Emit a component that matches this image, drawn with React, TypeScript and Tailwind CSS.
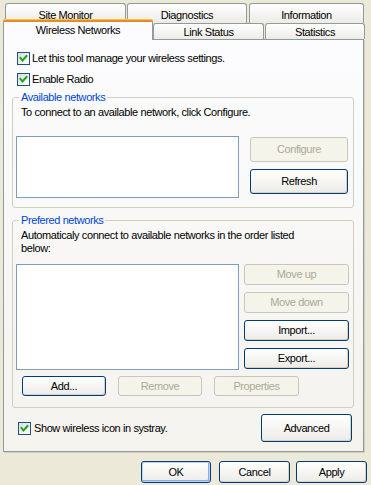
import React from "react";

function Check({ checked = true }: { checked?: boolean }) {
  return (
    <span className="flex h-[13px] w-[13px] shrink-0 items-center justify-center border border-[#1C5180] bg-linear-to-br from-[#DCDCD7] to-white">
      {checked && (
        <svg width="11" height="11" viewBox="0 0 11 11">
          <path d="M2.5 5 L4.5 7.5 L8.5 3" fill="none" stroke="#21A121" strokeWidth="2" strokeLinecap="square" />
        </svg>
      )}
    </span>
  );
}

function XpButton({
  label,
  className = "",
  disabled = false,
  isDefault = false,
}: {
  label: string;
  className?: string;
  disabled?: boolean;
  isDefault?: boolean;
}) {
  const look = disabled
    ? "border-[#C9C7BA] bg-[#F5F4EA] text-[#ACA899]"
    : isDefault
    ? "border-[#003C74] bg-linear-to-b from-white to-[#ECEBE6] text-black shadow-[inset_0_0_0_1px_#BCD4F6,inset_-1px_-1px_0_1px_#89ADE4]"
    : "border-[#003C74] bg-linear-to-b from-white to-[#ECEBE6] text-black shadow-[inset_-1px_-1px_0_#D6D0C5]";
  return (
    <div className={`flex shrink-0 items-center justify-center rounded-[3px] border ${look} ${className}`}>
      {label}
    </div>
  );
}

function Tab({ label, className = "" }: { label: string; className?: string }) {
  return (
    <div
      className={`flex shrink-0 justify-center rounded-t-[3px] border border-b-0 border-[#919B9C] bg-linear-to-b from-white to-[#ECEBE6] ${className}`}
    >
      {label}
    </div>
  );
}

export default function App() {
  return (
    <div className="h-[485px] w-[371px] overflow-hidden bg-[#ECE9D8] font-['Liberation_Sans',Arial,sans-serif] text-[11px] leading-[13px] tracking-[-0.4px] text-black">
      {/* back row of tabs */}
      <div className="ml-[5px] mt-[3px] flex h-[20px] items-start">
        <Tab label="Site Monitor" className="h-[20px] w-[121px] pt-[5px]" />
        <Tab label="Diagnostics" className="ml-[1px] h-[20px] w-[120px] pt-[5px]" />
        <Tab label="Information" className="ml-[2px] h-[20px] w-[115px] pt-[5px]" />
      </div>

      {/* front row of tabs */}
      <div className="relative z-10 ml-[3px] -mt-[4px] flex h-[20px] items-end">
        <div className="relative -mb-px flex h-[21px] w-[150px] justify-center rounded-t-[3px] border-x border-[#919B9C] bg-[#FCFCFE] pt-[5px]">
          <div className="absolute -left-px -right-px top-0 h-[3px] rounded-t-[3px] bg-[#E68B2C] shadow-[inset_0_1px_0_#FFC83C]" />
          Wireless Networks
        </div>
        <Tab label="Link Status" className="h-[16px] w-[111px] pt-[2px]" />
        <Tab label="Statistics" className="ml-[1px] h-[16px] w-[100px] pt-[2px]" />
      </div>

      {/* tab page */}
      <div className="ml-[3px] flex h-[413px] w-[361px] flex-col border border-[#919B9C] bg-linear-to-b from-[#FCFCFE] to-[#F4F3EE] shadow-[1px_1px_0_#D0CEBF]">
        <label className="ml-[13px] mt-[12px] flex items-center gap-[2px]">
          <Check />
          <span>Let this tool manage your wireless settings.</span>
        </label>
        <label className="ml-[13px] mt-[8px] flex items-center gap-[2px]">
          <Check />
          <span>Enable Radio</span>
        </label>

        <fieldset className="ml-[8px] mt-[5px] w-[342px] rounded-[3px] border border-[#D0D0BF] pb-[9px]">
          <legend className="ml-[6px] px-[2px] text-[#0046D5]">Available networks</legend>
          <div className="ml-[8px] mt-[2px]">To connect to an available network, click Configure.</div>
          <div className="ml-[3px] mt-[17px] flex">
            <div className="h-[62px] w-[223px] border border-[#7F9DB9] bg-white" />
            <div className="ml-[11px] flex flex-col gap-[7px] pt-px">
              <XpButton label="Configure" disabled className="h-[25px] w-[98px]" />
              <XpButton label="Refresh" className="h-[25px] w-[98px]" />
            </div>
          </div>
        </fieldset>

        <fieldset className="ml-[8px] mt-[6px] w-[342px] rounded-[3px] border border-[#D0D0BF] pb-[11px]">
          <legend className="ml-[6px] px-[2px] text-[#0046D5]">Prefered networks</legend>
          <div className="ml-[8px] mt-[2px]">
            Automaticaly connect to available networks in the order listed
            <br />
            below:
          </div>
          <div className="ml-[3px] mt-[9px] flex">
            <div className="h-[106px] w-[223px] border border-[#7F9DB9] bg-white" />
            <div className="ml-[5px] flex flex-col gap-[7px]">
              <XpButton label="Move up" disabled className="h-[21px] w-[105px]" />
              <XpButton label="Move down" disabled className="h-[21px] w-[105px]" />
              <XpButton label="Import..." className="h-[21px] w-[105px]" />
              <XpButton label="Export..." className="h-[21px] w-[105px]" />
            </div>
          </div>
          <div className="ml-[9px] mt-[6px] flex gap-[12px]">
            <XpButton label="Add..." className="h-[20px] w-[84px]" />
            <XpButton label="Remove" disabled className="h-[20px] w-[84px]" />
            <XpButton label="Properties" disabled className="h-[20px] w-[85px]" />
          </div>
        </fieldset>

        <div className="mt-[6px] flex items-center">
          <label className="ml-[14px] flex items-center gap-[3px]">
            <Check />
            <span>Show wireless icon in systray.</span>
          </label>
          <XpButton label="Advanced" className="ml-auto mr-[11px] h-[28px] w-[91px]" />
        </div>
      </div>

      {/* dialog buttons */}
      <div className="mt-[9px] flex">
        <XpButton label="OK" isDefault className="ml-[141px] h-[22px] w-[70px]" />
        <XpButton label="Cancel" className="ml-[8px] h-[22px] w-[71px]" />
        <XpButton label="Apply" className="ml-[6px] h-[22px] w-[71px]" />
      </div>
    </div>
  );
}
